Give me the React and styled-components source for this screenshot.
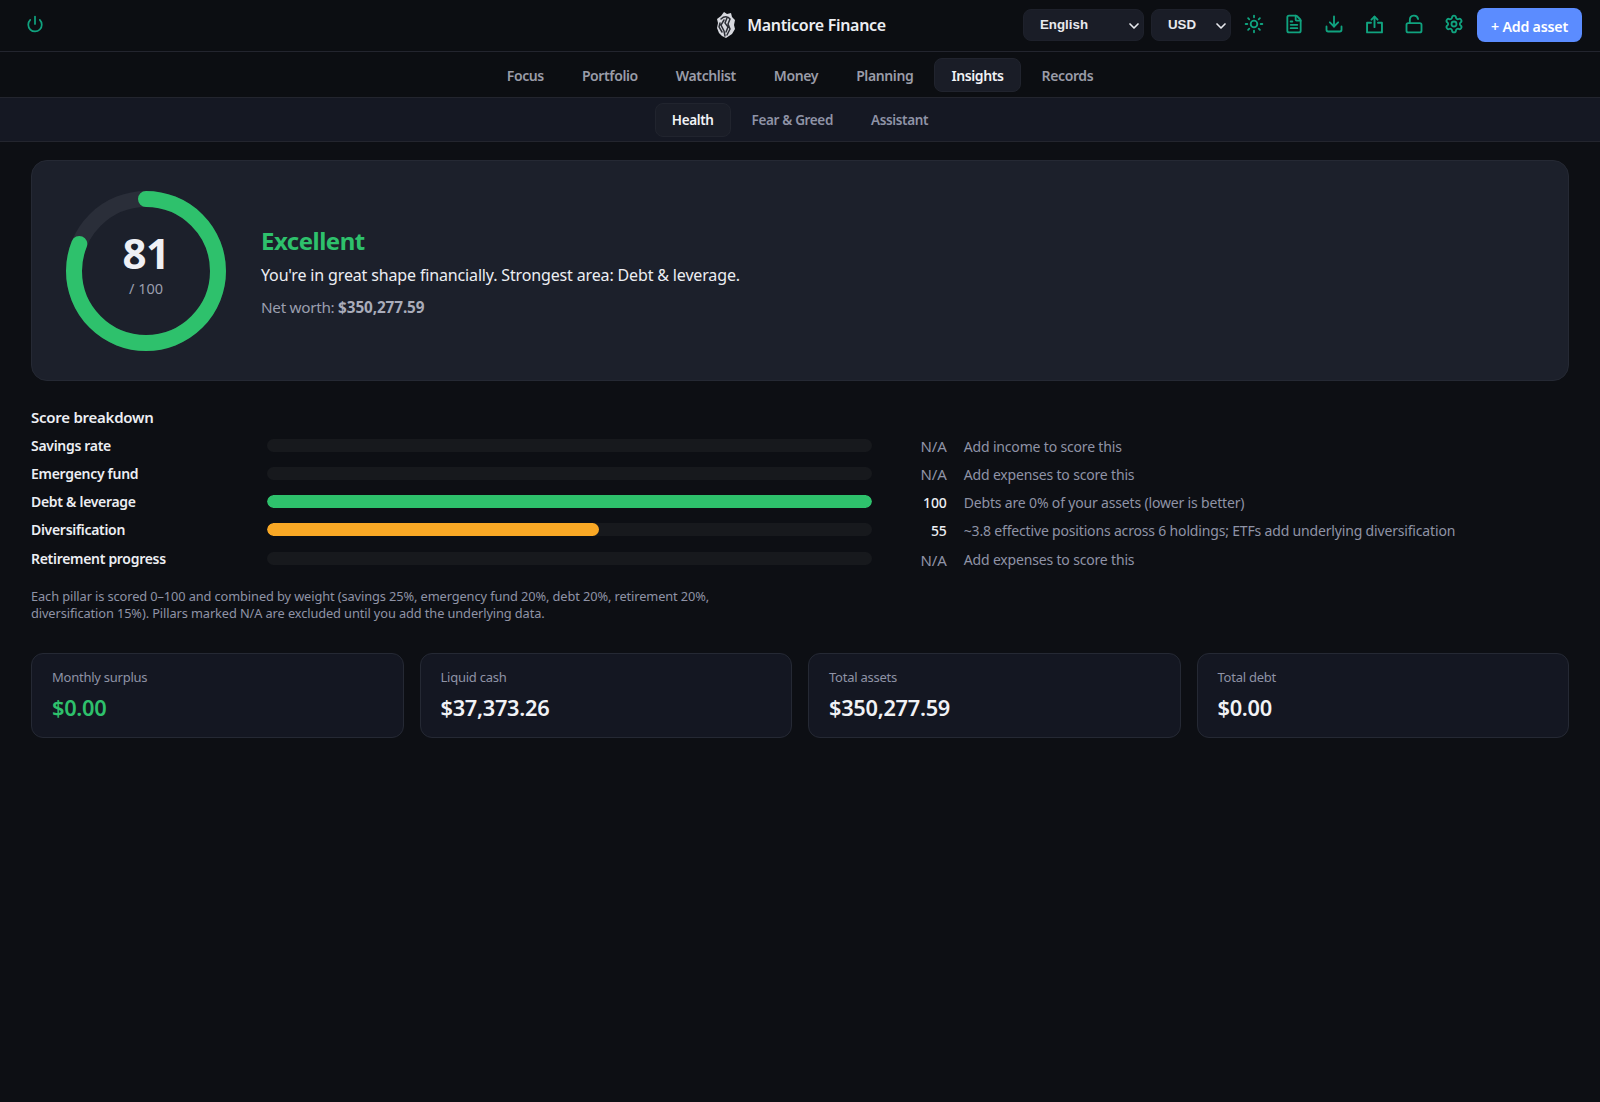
import React from 'react';
import styled, { createGlobalStyle } from 'styled-components';
import { Power, Sun, FileText, Download, LockOpen, Settings, ChevronDown } from 'lucide-react';

const GlobalStyle = createGlobalStyle`
  html, body { margin: 0; padding: 0; background: #0d0f14; }
  body {
    min-height: 1102px;
    font-family: "Noto Sans", "Open Sans", sans-serif;
    color: #e8e9ee;
    -webkit-font-smoothing: antialiased;
  }
  * { box-sizing: border-box; }
`;

const Header = styled.header`
  display: grid;
  grid-template-columns: 1fr auto 1fr;
  align-items: center;
  height: 52px;
  padding: 0 18px 1px 26px;
  background: #0c0e12;
  border-bottom: 1px solid #23252e;
`;

const PowerButton = styled.div`
  display: flex;
  align-items: center;
  margin-bottom: 2px;
  color: #10a37f;
`;

const Brand = styled.div`
  display: flex;
  align-items: center;
  gap: 10px;
  margin-right: 7px;
  font-size: 16px;
  font-weight: 600;
  letter-spacing: -0.3px;
  color: #eceef3;
`;

const Actions = styled.div`
  display: flex;
  align-items: center;
  justify-content: flex-end;
`;

const SelectWrap = styled.div`
  position: relative;
  width: ${(p) => p.$width}px;
  margin-right: 7px;
  color: #e8e9ee;

  svg {
    position: absolute;
    right: 2px;
    top: 9px;
    pointer-events: none;
  }
`;

const Select = styled.select`
  appearance: none;
  width: 100%;
  height: 32px;
  padding: 0 16px 1px;
  border: 1px solid #1e212b;
  border-radius: 8px;
  background: #1a1d27;
  color: #e8e9ee;
  font-family: "Liberation Sans", Arial, sans-serif;
  font-size: 13.3px;
  font-weight: 700;
`;

const IconRow = styled.div`
  display: flex;
  align-items: center;
  margin: 0 2px 2px -4px;
`;

const IconButton = styled.div`
  display: flex;
  align-items: center;
  justify-content: center;
  width: 40px;
  height: 36px;
  color: #10a37f;
`;

const AddButton = styled.button`
  width: 105px;
  height: 34px;
  margin-left: 1px;
  padding: 2px 0 0;
  border: 0;
  border-radius: 8px;
  background: #5b8cff;
  color: #fff;
  font-family: inherit;
  font-size: 14.2px;
  font-weight: 600;
  letter-spacing: -0.2px;
`;

const TabBar = styled.nav`
  display: flex;
  justify-content: center;
  align-items: center;
  gap: 4px;
  height: ${(p) => (p.$sub ? 44 : 46)}px;
  background: ${(p) => (p.$sub ? '#151823' : '#0c0e12')};
  border-bottom: 1px solid #23252e;
`;

const Tab = styled.div`
  display: flex;
  align-items: center;
  height: 34px;
  padding: ${(p) => (p.$sub ? '0 16px' : '1px 16px 0')};
  border: 1px solid ${(p) => (p.$active ? '#21242e' : 'transparent')};
  border-radius: 8px;
  background: ${(p) => (p.$active ? '#1a1d27' : 'transparent')};
  color: ${(p) => (p.$active ? '#f1f2f6' : p.$sub ? '#8f93a6' : '#9a9ca8')};
  font-size: ${(p) => (p.$sub ? 13.5 : 14)}px;
  font-weight: 600;
  letter-spacing: ${(p) => (p.$sub ? -0.35 : -0.38)}px;
`;

const Main = styled.main`
  padding: 18px 31px 0;
`;

const Hero = styled.section`
  display: flex;
  align-items: center;
  gap: 35px;
  height: 221px;
  padding: 0 34px;
  border: 1px solid #252934;
  border-radius: 16px;
  background: #1c202b;
`;

const Ring = styled.div`
  position: relative;
  flex: none;
  width: 160px;
  height: 160px;
`;

const RingText = styled.div`
  position: absolute;
  inset: 0;
  display: flex;
  flex-direction: column;
  align-items: center;
  justify-content: center;
  padding-bottom: 14px;
`;

const Score = styled.div`
  font-size: 42px;
  font-weight: 700;
  line-height: 46px;
  letter-spacing: -0.5px;
  color: #eff0f5;
`;

const Outof = styled.div`
  margin-top: 2px;
  font-size: 14.5px;
  line-height: 20px;
  color: #9a9eae;
`;

const HeroText = styled.div`
  padding-top: 2px;
`;

const Verdict = styled.div`
  font-size: 24px;
  font-weight: 700;
  line-height: 32px;
  letter-spacing: -0.5px;
  color: #2ec16c;
`;

const Sentence = styled.div`
  margin-top: 6px;
  font-size: 16px;
  line-height: 24px;
  letter-spacing: -0.15px;
  color: #eceef3;
`;

const NetWorth = styled.div`
  margin-top: 8px;
  font-size: 15.3px;
  line-height: 24px;
  letter-spacing: -0.3px;
  color: #9a9eae;

  strong {
    font-weight: 700;
    letter-spacing: -0.1px;
    color: #a9acba;
  }
`;

const SectionTitle = styled.h3`
  margin: 25px 0 6px;
  font-size: 15px;
  font-weight: 600;
  line-height: 22px;
  letter-spacing: -0.25px;
  color: #eceef3;
`;

const Rows = styled.div`
  display: flex;
  flex-direction: column;
  gap: 8.4px;
`;

const Row = styled.div`
  display: grid;
  grid-template-columns: 219.5px 1fr 60px 1fr;
  gap: 16px;
  align-items: center;
  height: 20px;
`;

const RowLabel = styled.div`
  font-size: 14px;
  font-weight: 600;
  letter-spacing: -0.3px;
  color: #eceef3;
`;

const Track = styled.div`
  height: 13px;
  border-radius: 7px;
  background: #17191d;
  overflow: hidden;
`;

const Fill = styled.div`
  height: 100%;
  border-radius: 7px;
  background: ${(p) => p.$color};
`;

const RowScore = styled.div`
  padding: 2px 1px 0 0;
  text-align: right;
  font-size: ${(p) => (p.$na ? 15 : 14)}px;
  font-weight: ${(p) => (p.$na ? 400 : 500)};
  letter-spacing: -0.1px;
  color: ${(p) => (p.$na ? '#8f93a6' : '#eceef3')};
`;

const RowDetail = styled.div`
  padding-top: 2px;
  font-size: 14px;
  letter-spacing: -0.17px;
  color: #8f93a6;
`;

const Note = styled.p`
  max-width: 715px;
  margin: 20px 0 0;
  font-size: 12.8px;
  line-height: 17.5px;
  letter-spacing: -0.1px;
  color: #8f93a6;
`;

const Stats = styled.section`
  display: grid;
  grid-template-columns: repeat(4, 1fr);
  gap: 16px;
  margin-top: 30px;
`;

const StatCard = styled.div`
  height: 85px;
  padding: 13px 20px;
  border: 1px solid #252934;
  border-radius: 12px;
  background: #141722;
`;

const StatLabel = styled.div`
  font-size: 13px;
  line-height: 20px;
  letter-spacing: -0.25px;
  color: #8f93a6;
`;

const StatValue = styled.div`
  margin-top: 6px;
  font-size: 21.8px;
  font-weight: 600;
  line-height: 30px;
  letter-spacing: -0.3px;
  color: ${(p) => (p.$good ? '#2ec16c' : '#f1f2f6')};
`;

const ShareIcon = () => (
  <svg width="21" height="21" viewBox="0 0 24 24" fill="none" stroke="currentColor" strokeWidth="2.2" strokeLinecap="round" strokeLinejoin="round">
    <path d="M8 10H3.5v11h17V10H16" />
    <path d="M12 15V3" />
    <path d="M8.5 6.5 12 3l3.5 3.5" />
  </svg>
);

const Logo = () => (
  <svg width="22" height="28" viewBox="0 0 22 28">
    <path d="M9 1l3 2 4-1 1 4 3 3-1 5 1 4-3 5-3 2-3 2-4-2-3-3-2-5 1-5-1-4 4-3z" fill="#d8d9df" />
    <path d="M6 8c3-3 7-3 9 0l-2 5 2 5-3 6M9 9l-3 5 3 6 1 5M12 7l-2 5 3 4-2 5M5 12l-1 4 3 5" fill="none" stroke="#2b2d34" strokeWidth="1.5" strokeLinecap="round" />
  </svg>
);

const tabs = ['Focus', 'Portfolio', 'Watchlist', 'Money', 'Planning', 'Insights', 'Records'];
const subTabs = ['Health', 'Fear & Greed', 'Assistant'];

const pillars = [
  { name: 'Savings rate', score: null, detail: 'Add income to score this' },
  { name: 'Emergency fund', score: null, detail: 'Add expenses to score this' },
  { name: 'Debt & leverage', score: 100, color: '#2ec16c', detail: 'Debts are 0% of your assets (lower is better)' },
  { name: 'Diversification', score: 55, color: '#f9a825', detail: '~3.8 effective positions across 6 holdings; ETFs add underlying diversification' },
  { name: 'Retirement progress', score: null, detail: 'Add expenses to score this' },
];

const stats = [
  { label: 'Monthly surplus', value: '$0.00', good: true },
  { label: 'Liquid cash', value: '$37,373.26' },
  { label: 'Total assets', value: '$350,277.59' },
  { label: 'Total debt', value: '$0.00' },
];

const circumference = 2 * Math.PI * 72;

const App = () => (
  <>
    <GlobalStyle />
    <Header>
      <PowerButton><Power size={18} strokeWidth={2.3} /></PowerButton>
      <Brand><Logo />Manticore Finance</Brand>
      <Actions>
        <SelectWrap $width={121}>
          <Select defaultValue="English"><option>English</option></Select>
          <ChevronDown size={16} strokeWidth={2.5} />
        </SelectWrap>
        <SelectWrap $width={80}>
          <Select defaultValue="USD"><option>USD</option></Select>
          <ChevronDown size={16} strokeWidth={2.5} />
        </SelectWrap>
        <IconRow>
          <IconButton><Sun size={20} strokeWidth={2.2} /></IconButton>
          <IconButton><FileText size={20} strokeWidth={2.2} /></IconButton>
          <IconButton><Download size={20} strokeWidth={2.2} /></IconButton>
          <IconButton><ShareIcon /></IconButton>
          <IconButton><LockOpen size={20} strokeWidth={2.2} /></IconButton>
          <IconButton><Settings size={20} strokeWidth={2.2} /></IconButton>
        </IconRow>
        <AddButton>+ Add asset</AddButton>
      </Actions>
    </Header>
    <TabBar>
      {tabs.map((t) => <Tab key={t} $active={t === 'Insights'}>{t}</Tab>)}
    </TabBar>
    <TabBar $sub>
      {subTabs.map((t) => <Tab key={t} $sub $active={t === 'Health'}>{t}</Tab>)}
    </TabBar>
    <Main>
      <Hero>
        <Ring>
          <svg width="160" height="160" viewBox="0 0 160 160">
            <circle cx="80" cy="80" r="72" fill="none" stroke="#2a2e39" strokeWidth="16" />
            <circle
              cx="80"
              cy="80"
              r="72"
              fill="none"
              stroke="#2ec16c"
              strokeWidth="16"
              strokeLinecap="round"
              strokeDasharray={`${circumference * 0.81} ${circumference}`}
              transform="rotate(-90 80 80)"
            />
          </svg>
          <RingText>
            <Score>81</Score>
            <Outof>/ 100</Outof>
          </RingText>
        </Ring>
        <HeroText>
          <Verdict>Excellent</Verdict>
          <Sentence>You're in great shape financially. Strongest area: Debt &amp; leverage.</Sentence>
          <NetWorth>Net worth: <strong>$350,277.59</strong></NetWorth>
        </HeroText>
      </Hero>
      <SectionTitle>Score breakdown</SectionTitle>
      <Rows>
        {pillars.map((p) => (
          <Row key={p.name}>
            <RowLabel>{p.name}</RowLabel>
            <Track>
              {p.score !== null && <Fill $color={p.color} style={{ width: `${p.score}%` }} />}
            </Track>
            <RowScore $na={p.score === null}>{p.score === null ? 'N/A' : p.score}</RowScore>
            <RowDetail>{p.detail}</RowDetail>
          </Row>
        ))}
      </Rows>
      <Note>
        Each pillar is scored 0–100 and combined by weight (savings 25%, emergency fund 20%, debt 20%, retirement 20%, diversification 15%). Pillars marked N/A are excluded until you add the underlying data.
      </Note>
      <Stats>
        {stats.map((s) => (
          <StatCard key={s.label}>
            <StatLabel>{s.label}</StatLabel>
            <StatValue $good={s.good}>{s.value}</StatValue>
          </StatCard>
        ))}
      </Stats>
    </Main>
  </>
);

export default App;
